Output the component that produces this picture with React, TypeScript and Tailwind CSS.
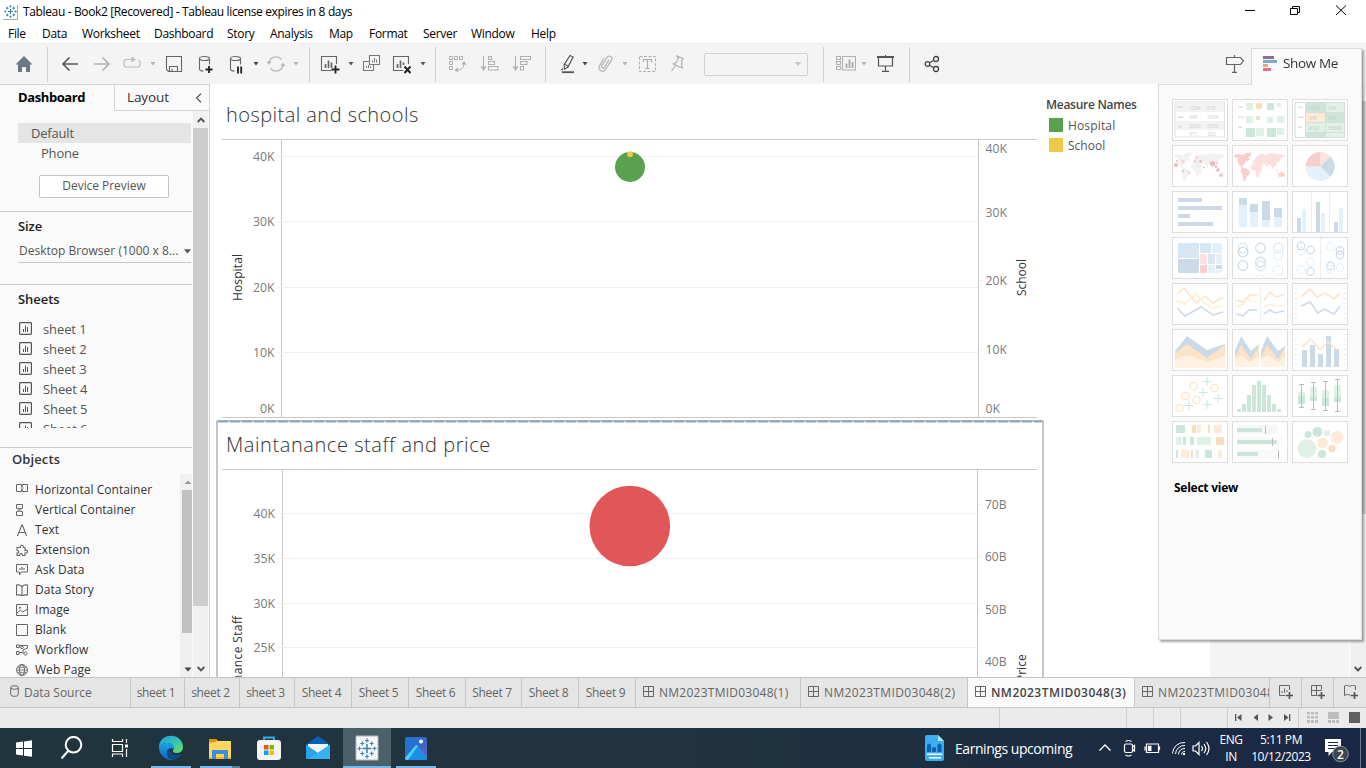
import React from "react";

type Kids = { children?: React.ReactNode };

const Icon = ({ className = "", children, w = 20, h = 20 }: Kids & { className?: string; w?: number; h?: number }) => (
  <svg width={w} height={h} viewBox={`0 0 ${w} ${h}`} fill="none" className={`shrink-0 ${className}`}>
    {children}
  </svg>
);

const Caret = ({ className = "" }: { className?: string }) => (
  <svg width="6" height="4" viewBox="0 0 6 4" className={`shrink-0 ${className}`}>
    <path d="M0.5 0H5.5L3 3.4Z" fill="currentColor" />
  </svg>
);

const Sep = ({ className = "" }: { className?: string }) => (
  <div className={`h-[35px] w-px shrink-0 bg-[#d0d0d0] ${className}`} />
);

const TableauMark = ({ size, className = "" }: { size: number; className?: string }) => (
  <svg width={size} height={size} viewBox="0 0 24 24" fill="none" stroke="#2f7ca6" className={`shrink-0 ${className}`}>
    <path d="M12 7.5v9M7.5 12h9" strokeWidth="1.9" />
    <path d="M12 0.5v4M10 2.5h4M12 19.5v4M10 21.5h4M2.5 10v4M0.5 12h4M21.5 10v4M19.5 12h4" strokeWidth="1.6" />
    <path d="M6 3.2v5M3.5 5.7h5M18 3.2v5M15.5 5.7h5M6 15.8v5M3.5 18.3h5M18 15.8v5M15.5 18.3h5" strokeWidth="1.7" />
  </svg>
);

const TitleBar = () => (
  <div className="flex h-6 shrink-0 items-center bg-white">
    <div className="ml-[3px] flex size-[15px] items-center justify-center border-r border-b border-[#aaa]">
      <TableauMark size={13} />
    </div>
    <span className="ml-[5px] text-[12px] tracking-[-0.36px] text-black">
      Tableau - Book2 [Recovered] - Tableau license expires in 8 days
    </span>
    <svg width="110" height="20" viewBox="0 0 110 20" className="mr-[18px] ml-auto" fill="none" stroke="#000">
      <path d="M7 8.5h10" />
      <path d="M52.5 6.5h7v6h-7zM54.5 6V4.500h7v6H60" />
      <path d="M98 3.500l10 9.500M108 3.500L98 13" />
    </svg>
  </div>
);

const menus: [string, string][] = [
  ["File", "w-[34px]"], ["Data", "w-[40px]"], ["Worksheet", "w-[72px]"], ["Dashboard", "w-[73px]"],
  ["Story", "w-[43px]"], ["Analysis", "w-[59px]"], ["Map", "w-[40px]"], ["Format", "w-[54px]"],
  ["Server", "w-[48px]"], ["Window", "w-[60px]"], ["Help", "w-[40px]"],
];

const MenuBar = () => (
  <div className="flex h-[19px] shrink-0 items-center bg-white pl-2 text-[12px] tracking-[-0.3px] text-black">
    {menus.map(([m, w]) => (
      <span key={m} className={w}>{m}</span>
    ))}
  </div>
);

const Toolbar = () => (
  <div className="flex h-[41px] shrink-0 items-center border-t border-[#ececec] bg-[#f4f4f4] text-[#666]">
    <Icon className="ml-[14px]">
      <path d="M10 2L18.5 10.5H16V18H12V13H8V18H4V10.5H1.5Z" fill="#6d7785" />
    </Icon>
    <Sep className="ml-[13px]" />
    <Icon className="ml-3"><path d="M18 10H3M9.5 3.5L3 10l6.500 6.500" stroke="#5a5a5a" strokeWidth="1.700" /></Icon>
    <Icon className="ml-3"><path d="M2 10H17M10.500 3.500L17 10l-6.500 6.500" stroke="#b2b2b2" strokeWidth="1.700" /></Icon>
    <Icon className="ml-[10px]">
      <path d="M10 5.500H4.500a2.500 2.500 0 0 0-2.500 2.500v2.500a2.500 2.500 0 0 0 2.500 2.500h11a2.500 2.500 0 0 0 2.500-2.500V8.500a2.500 2.500 0 0 0-1.500-2.300" stroke="#bcbcbc" strokeWidth="1.2" />
      <path d="M9.500 2.500L14 5.500L9.500 8.500Z" fill="#bcbcbc" />
    </Icon>
    <Caret className="ml-2 text-[#b0b0b0]" />
    <Icon className="ml-2">
      <path d="M2.500 2.500h15v15h-13l-2-2zM5.500 17.500v-5h8v5M8 17.500v-2.500" stroke="#666" strokeWidth="1.1" />
    </Icon>
    <Icon className="ml-3">
      <g stroke="#666" strokeWidth="1.1"><ellipse cx="8.500" cy="4.500" rx="5" ry="2" /><path d="M3.500 4.500v10.500c0 1.200 1.800 2 4 2M13.500 4.500v6" /></g>
      <path d="M13 12v7M9.500 15.500h7" stroke="#222" strokeWidth="1.8" />
    </Icon>
    <Icon className="ml-3">
      <g stroke="#666" strokeWidth="1.1"><ellipse cx="7.500" cy="4.500" rx="5" ry="2" /><path d="M2.500 4.500v10.500c0 1.200 1.800 2 4 2M12.500 4.500v6" /></g>
      <path d="M10 12.500v7M13.200 12.500v7" stroke="#222" strokeWidth="1.800" />
    </Icon>
    <Caret className="ml-[5px] text-[#444]" />
    <Icon className="ml-[7px]">
      <path d="M3 8.500a7.200 7.200 0 0 1 12.500-3M17 11.500a7.200 7.200 0 0 1-12.500 3" stroke="#b8b8b8" strokeWidth="1.300" />
      <path d="M0.500 7.500h5L3 11ZM14.500 12h5L17 8.500Z" fill="#b8b8b8" />
    </Icon>
    <Caret className="ml-[7px] text-[#b0b0b0]" />
    <Sep className="ml-[10px]" />
    <Icon className="ml-[10px]">
      <path d="M16.500 10V2.500h-15v14h10" stroke="#666" strokeWidth="1.1" />
      <path d="M5.500 10v4M8.500 6.500V14M11.500 8.500V14" stroke="#666" strokeWidth="1.700" />
      <path d="M15.500 11.500v8M11.500 15.500h8" stroke="#222" strokeWidth="1.800" />
    </Icon>
    <Caret className="ml-2 text-[#555]" />
    <Icon className="ml-2">
      <path d="M7.500 1.500h10v9h-10zM7.500 7.500h-6v9h10v-6" stroke="#777" strokeWidth="1.1" />
      <path d="M10.500 6.500v2M12.500 4v4.500M14.500 5.500v3M4.500 12v2M6.500 11v3M8.500 12.500v1.500" stroke="#777" />
    </Icon>
    <Icon className="ml-[10px]">
      <path d="M16.500 10V2.500h-15v14h10" stroke="#666" strokeWidth="1.1" />
      <path d="M5.500 10v4M8.500 6.500V14M11.500 8.500V11" stroke="#666" strokeWidth="1.700" />
      <path d="M12.500 12.500l6 6.500M18.500 12.500l-6 6.500" stroke="#222" strokeWidth="1.900" />
    </Icon>
    <Caret className="ml-2 text-[#555]" />
    <Sep className="ml-[9px]" />
    <Icon className="ml-3">
      <path d="M1.500 2.500h3v3h-3zM6.500 2.500h3v3h-3zM11.500 2.500h3v3h-3zM1.500 7.500h3v3h-3zM1.500 12.500h3v3h-3zM16 8.500v2a6 6 0 0 1-6 5.500h-1" stroke="#b0b0b0" />
      <path d="M13.500 10.500L16 7l2.500 3.500ZM10 13.500L6.500 16l3.500 2.500Z" fill="#b0b0b0" />
    </Icon>
    <Icon className="ml-3">
      <path d="M3.500 2v13M8.500 2.500h3v3h-3zM8.500 7.500h6v3h-6zM8.500 12.500h9.500v3.500H8.500z" stroke="#b0b0b0" strokeWidth="1.1" />
      <path d="M0.500 12.500h6L3.500 17Z" fill="#b0b0b0" />
    </Icon>
    <Icon className="ml-3">
      <path d="M3.500 2v13M8.500 2.500h10v3h-10zM8.500 7.500h6.500v3H8.500zM8.500 12.500h3v3.500h-3z" stroke="#b0b0b0" strokeWidth="1.1" />
      <path d="M0.500 12.500h6L3.500 17Z" fill="#b0b0b0" />
    </Icon>
    <Sep className="ml-[13px]" />
    <Icon className="ml-3">
      <path d="M12 1.500l3 1.500L10 13l-3.500 2-.5-4zM7 10.500l3 1.500M5 14.500l-1.500 1.500" stroke="#555" strokeWidth="1.200" />
      <path d="M4 18.200h12" stroke="#555" strokeWidth="1.800" />
    </Icon>
    <Caret className="ml-1 text-[#444]" />
    <Icon className="ml-2">
      <path d="M13 5.500L8.500 13.500a1.600 1.600 0 0 1-2.800-1.600L11 3.500a2.600 2.600 0 0 1 4.500 2.700L9.500 15.500a3.500 3.500 0 0 1-6-3.600L8 4" stroke="#b4b4b4" strokeWidth="1.200" />
    </Icon>
    <Caret className="ml-[6px] text-[#b0b0b0]" />
    <Icon className="ml-[10px]">
      <path d="M1.500 2.500h16v15h-16z" stroke="#b0b0b0" strokeDasharray="3 1.500" />
      <path d="M5.500 8V5.500h8V8M9.500 5.500v9M7.500 14.500h4" stroke="#aaa" strokeWidth="1.200" />
    </Icon>
    <Icon className="ml-[10px]">
      <path d="M9 2l6 2.500-1 2-.5 4 .8 3.500-9-4 3.200-1.700 1.500-3.800zM7.500 11.500l-4 5.500" stroke="#b0b0b0" strokeWidth="1.200" />
    </Icon>
    <div className="ml-4 flex h-[23px] w-[104px] shrink-0 items-center justify-end rounded-[2px] border border-[#d2d2d2] pr-[5px]">
      <svg width="8" height="5" viewBox="0 0 8 5"><path d="M0.5 0h7L4 4Z" fill="#c8c8c8" /></svg>
    </div>
    <Sep className="ml-[15px]" />
    <Icon className="ml-3">
      <path d="M.5 2.500h4v3h-4zM.5 7.500h4v3h-4zM.5 12.500h4v3h-4zM6.500 2.500h13v13.500h-13z" stroke="#b0b0b0" strokeWidth="1.100" />
      <path d="M10.500 9.500v4.500M13.500 5.500v8.500M16.500 8v6" stroke="#aaa" strokeWidth="1.800" />
    </Icon>
    <Caret className="ml-[5px] text-[#b0b0b0]" />
    <Icon className="ml-[9px]">
      <path d="M1 3h17" stroke="#555" strokeWidth="2" />
      <path d="M2.500 4v8h14V4M9.500 1v1M9.500 12v5M6 17.300h7" stroke="#555" strokeWidth="1.200" />
    </Icon>
    <Sep className="ml-[13px]" />
    <Icon className="ml-3">
      <g stroke="#444" strokeWidth="1.300"><circle cx="5.500" cy="10" r="2.300" /><circle cx="14" cy="5" r="2.500" /><circle cx="14" cy="15" r="2.500" /><path d="M7.500 8.800l4.300-2.500M7.500 11.300l4.300 2.400" /></g>
    </Icon>
    <Icon className="mr-[121px] ml-auto">
      <path d="M1.500 3.500h14l3 3.500-3 3.500h-14zM9.500 1v2.500M9.500 10.500V18M7 18.300h5" stroke="#666" strokeWidth="1.200" />
    </Icon>
  </div>
);

const SheetIcon = () => (
  <Icon w={13} h={13} className="-mt-px">
    <rect x=".6" y=".6" width="11.800" height="11.800" rx=".8" stroke="#555" strokeWidth="1.200" />
    <path d="M4.500 7v3M6.500 3.500V10M8.500 5v5" stroke="#555" />
  </Icon>
);

const objects: [string, React.ReactNode][] = [
  ["Horizontal Container", <><path d="M.5 .5h5v7h-5zM6.500 .5h5v7h-5z" stroke="#666" /><path d="M4.500 2.500h3v3h-3z" fill="#bbb" /></>],
  ["Vertical Container", <><path d="M.5 .5h6v4h-6zM.5 7.500h6v4h-6z" stroke="#666" /><path d="M1.500 4.500h4v3h-4z" fill="#aaa" /></>],
  ["Text", <path d="M1.500 12L5.800 1h.6L10.600 12M3 8.500h6.200" stroke="#666" strokeWidth="1.100" />],
  ["Extension", <path d="M1 3.500h3.500C3.500 1 7.500 0 7.500 3.500H9v3c3.500-1 3.500 3 0 2.500v2.500H6.500c0-2.500-3-2.500-3 0H1V9c2.500 0 2.500-2.500 0-2.500z" stroke="#666" strokeWidth="1.100" />],
  ["Ask Data", <><path d="M.5 .5h11v7.500H5.500L3.500 11V8h-3z" stroke="#666" /><path d="M3 4h2V3h2v1h2v2H3z" fill="#aaa" /></>],
  ["Data Story", <path d="M.5 1c2.500-.5 4 0 5.500 1.500 1.500-1.500 3-2 5.500-1.500v10c-2.500-.5-4 0-5.500 .7-1.500-.7-3-1.200-5.500-.7zM6 2.500v9" stroke="#666" strokeWidth="1.100" />],
  ["Image", <><path d="M.5 .5h11v11H.5zM.5 9.500l4-3.500 2 2 5-3" stroke="#666" /><circle cx="4" cy="3.800" r="1" fill="#666" /></>],
  ["Blank", <path d="M.5 .5h11v11H.5z" stroke="#666" />],
  ["Workflow", <g stroke="#666"><path d="M.5 1h3v2.500h-3zM.5 7.500h2.500v3H.5zM3.500 1.500h8v2.500L7 6v4M3 8.500h3" /><circle cx="6" cy="3.500" r="1.300" /><circle cx="9.500" cy="9.500" r="1.600" /></g>],
  ["Web Page", <g stroke="#666"><circle cx="6" cy="6" r="5.400" /><ellipse cx="6" cy="6" rx="2.500" ry="5.400" /><path d="M.6 6h10.800M1.500 3.300h9M1.500 8.700h9" strokeWidth=".8" /></g>],
];

const Sidebar = () => (
  <aside className="flex w-[210px] shrink-0 flex-col border-t border-r border-[#d4d4d4] bg-[#fafafa] text-[13px] text-[#555]">
    <div className="flex h-[26px] shrink-0">
      <div className="w-[114px] pt-[3px] pl-[18px] text-[13px] font-bold tracking-[-0.4px] text-black">Dashboard</div>
      <div className="flex flex-1 items-center justify-between border-b border-l border-[#d4d4d4] pr-[7px] pl-3">
        <span className="text-[13.5px] tracking-[-0.1px] text-[#333]">Layout</span>
        <svg width="7" height="10" viewBox="0 0 7 10" fill="none" stroke="#555" strokeWidth="1.200"><path d="M6 .7L1.500 5L6 9.300" /></svg>
      </div>
    </div>
    <div className="flex min-h-0 flex-1">
      <div className="flex w-[193px] flex-col overflow-hidden">
        <div className="mt-3 ml-[18px] h-5 w-[173px] shrink-0 bg-[#e5e5e5] pl-[13px] leading-5 tracking-[-0.2px]">Default</div>
        <div className="h-5 shrink-0 pl-[41px] leading-5 tracking-[-0.2px]">Phone</div>
        <button className="mt-3 ml-[39px] flex h-[23px] w-[130px] shrink-0 items-center justify-center rounded-[2px] border border-[#c4c4c4] bg-white text-[12px] tracking-[-0.05px]">
          <span className="mb-px">Device Preview</span>
        </button>
        <div className="mt-[13px] h-px w-[192px] shrink-0 bg-[#c8c8c8]" />
        <div className="mt-1 h-5 shrink-0 pl-[18px] leading-5 font-semibold tracking-[-0.1px] text-[#222]">Size</div>
        <div className="mt-1 ml-[18px] flex h-[23px] w-[173px] shrink-0 items-center justify-between border-b border-[#c8c8c8]">
          <span className="pl-px text-[12px] tracking-[0.02px] whitespace-nowrap">Desktop Browser (1000 x 8...</span>
          <svg width="7" height="5" viewBox="0 0 7 5"><path d="M0 .3h7L3.500 4.500Z" fill="#555" /></svg>
        </div>
        <div className="mt-[21px] h-px w-[192px] shrink-0 bg-[#c8c8c8]" />
        <div className="mt-1 h-5 shrink-0 pl-[18px] leading-5 font-semibold tracking-[-0.05px] text-[#222]">Sheets</div>
        <div className="mt-[10px] h-[109px] shrink-0 overflow-hidden">
          {["sheet 1", "sheet 2", "sheet 3", "Sheet 4", "Sheet 5", "Sheet 6"].map((s) => (
            <div key={s} className="flex h-5 items-center gap-[11px] pl-[19px] tracking-[-0.1px]">
              <SheetIcon />
              <span className="pt-px">{s}</span>
            </div>
          ))}
        </div>
        <div className="mt-[19px] h-px w-[192px] shrink-0 bg-[#c8c8c8]" />
        <div className="mt-px h-5 shrink-0 pl-3 leading-5 font-semibold tracking-[0.1px] text-[#333]">Objects</div>
        <div className="mt-[5px] flex min-h-0 flex-1">
          <div className="w-[180px] overflow-hidden pt-[6px]">
            {objects.map(([name, art]) => (
              <div key={name} className="flex h-5 items-center gap-[7px] pl-4 text-[12px] tracking-[0.04px] text-[#333]">
                <Icon w={12} h={12}>{art}</Icon>
                {name}
              </div>
            ))}
          </div>
          <div className="flex w-3 flex-col items-end bg-[#f0f0f0]">
            <svg width="10" height="16" viewBox="0 0 10 16"><path d="M2.500 10L6 6.500L9.500 10Z" fill="#999" /></svg>
            <div className="h-[143px] w-[10px] bg-[#c1c1c1]" />
            <svg width="10" height="16" viewBox="0 0 10 16" className="mt-auto"><path d="M2.500 6.500h7L6 10.500Z" fill="#444" /></svg>
          </div>
        </div>
      </div>
      <div className="flex w-[15px] flex-col bg-[#f0f0f0]">
        <div className="flex h-[17px] items-center justify-center">
          <svg width="8" height="6" viewBox="0 0 8 6" fill="none" stroke="#505050" strokeWidth="1.800"><path d="M.7 5L4 1.600L7.300 5" /></svg>
        </div>
        <div className="h-[478px] bg-[#cdcdcd]" />
        <svg width="8" height="6" viewBox="0 0 8 6" fill="none" stroke="#505050" strokeWidth="1.800" className="mx-auto mt-auto mb-[5px]"><path d="M.7 1L4 4.400L7.300 1" /></svg>
      </div>
    </div>
  </aside>
);

const hospitalLeft: [string, number][] = [["40K", 17], ["30K", 82], ["20K", 148], ["10K", 213], ["0K", 269]];
const hospitalRight: [string, number][] = [["40K", 9], ["30K", 73], ["20K", 141], ["10K", 210], ["0K", 269]];
const staffLeft: [string, number][] = [["40K", 44], ["35K", 89], ["30K", 134], ["25K", 178]];
const staffRight: [string, number][] = [["70B", 35], ["60B", 87], ["50B", 140], ["40B", 192]];

const AxisLabels = ({ rows, x, anchor }: { rows: [string, number][]; x: number; anchor: "start" | "end" }) => (
  <g fill="#7a7a7a" fontSize="12">
    {rows.map(([t, y]) => (
      <text key={t} x={x} y={y + 5} textAnchor={anchor} textLength={t === "0K" ? 14.500 : 21.500} lengthAdjust="spacingAndGlyphs">{t}</text>
    ))}
  </g>
);

const Dashboard = () => (
  <main className="flex min-w-0 flex-1 bg-white">
    <div className="ml-[6px] flex w-[828px] shrink-0 flex-col overflow-hidden">
      <section className="flex h-[336px] shrink-0 flex-col">
        <h2 className="h-[55px] pt-[17px] pl-[10px] text-[20px] leading-7 font-light tracking-[0.45px] text-[#333]">hospital and schools</h2>
        <svg width="820" height="279" viewBox="0 0 820 279" fill="none" className="ml-[6px]">
          <path d="M0 .5H815M0 278.500H815M59.500 0V279M756.500 0V279" stroke="#c8c8c8" />
          <path d="M55 17.500H756M55 82.500H756M55 148.500H756M55 213.500H756M757 5.500H761M757 73.500H761M757 141.500H761M757 210.500H761" stroke="#f0f0f0" />
          <AxisLabels rows={hospitalLeft} x={52.500} anchor="end" />
          <AxisLabels rows={hospitalRight} x={763.500} anchor="start" />
          <circle cx="408" cy="28" r="15" fill="#59a14f" />
          <circle cx="408" cy="15.300" r="3" fill="#edc948" />
          <text transform="translate(20 162) rotate(-90)" fontSize="12" fill="#333" textLength="47">Hospital</text>
          <text transform="translate(804 157) rotate(-90)" fontSize="12" fill="#333" textLength="37">School</text>
        </svg>
      </section>
      <section className="flex flex-1 flex-col overflow-hidden border-x-2 border-[#c6c6c6]">
        <svg width="824" height="3" viewBox="0 0 824 3" className="shrink-0">
          <path d="M0 1H824" stroke="#b9bcc2" strokeWidth="2" />
          <path d="M0 1.500H824" stroke="#8fa3c4" strokeWidth="1.800" strokeDasharray="10 2" />
        </svg>
        <h2 className="h-[46px] shrink-0 pt-2 pl-[8px] text-[20px] leading-7 font-light tracking-[0.57px] text-[#333]">Maintanance staff and price</h2>
        <svg width="820" height="208" viewBox="0 0 820 208" fill="none" className="ml-[4px] shrink-0">
          <path d="M0 .5H815M60.500 0V208M755.500 0V208" stroke="#c8c8c8" />
          <path d="M56 44.500H755M56 89.500H755M56 134.500H755M56 178.500H755M756 35.500H760M756 87.500H760M756 140.500H760M756 192.500H760" stroke="#f0f0f0" />
          <AxisLabels rows={staffLeft} x={53} anchor="end" />
          <AxisLabels rows={staffRight} x={763} anchor="start" />
          <circle cx="407.800" cy="57" r="40.300" fill="#e15759" />
          <text transform="translate(20 254) rotate(-90)" fontSize="12" fill="#333" textLength="107">Maintanance Staff</text>
          <text transform="translate(804 213) rotate(-90)" fontSize="12" fill="#333">Price</text>
        </svg>
      </section>
    </div>
    <div className="flex w-[166px] shrink-0 flex-col pt-[11px] pl-[2px] text-[12px] text-[#555]">
      <div className="h-5 leading-5 font-semibold tracking-[-0.27px] text-[#444]">Measure Names</div>
      <div className="flex h-5 items-center pl-[3px]"><span className="mr-[5px] size-[14px] bg-[#59a14f]" /><span className="pt-px tracking-[0.15px]">Hospital</span></div>
      <div className="flex h-5 items-center pl-[3px]"><span className="mr-[5px] size-[14px] bg-[#edc948]" /><span className="pt-px">School</span></div>
    </div>
    <div className="flex-1 border-r border-white bg-[#f4f4f4]" />
    <div className="flex w-4 shrink-0 flex-col bg-[#f0f0f0]">
      <div className="mt-[17px] h-[413px] bg-[#cdcdcd]" />
      <svg width="8" height="6" viewBox="0 0 8 6" fill="none" stroke="#505050" strokeWidth="1.800" className="mx-auto mt-auto mb-[5px]"><path d="M.7 1L4 4.400L7.300 1" /></svg>
    </div>
  </main>
);

const DG = "#cce6da", LG = "#e0f2e7", OR = "#fadcc0", LO = "#feebd7", DB = "#ccdae8", LB = "#e4f1fb", DR = "#f7cfcd", LR = "#ffe1e1", LINE = "#fde3c7";

const Rects = ({ items }: { items: [number, number, number, number, string][] }) => (
  <>{items.map(([x, y, w, h, c], i) => <rect key={i} x={x} y={y} width={w} height={h} fill={c} />)}</>
);

const Rings = ({ items, r }: { items: [number, number, string][]; r: number }) => (
  <>{items.map(([x, y, c], i) => <circle key={i} cx={x} cy={y} r={r} stroke={c} strokeWidth="1.200" />)}</>
);

const World = ({ americas, rest, south }: { americas: string; rest: string; south: string }) => (
  <>
    <path d="M2 10l4-1 5 1 3-2 6-.5-1 3-3 2 2 2-4 2-2 3-2 1 1 2 2 1-1 1-3-2-2-3-2-4 1-3-3 .5zM10 23l4 .5 4 3-1 3-3 3-1 4-1.500-1-1-6-2-3z" fill={americas} />
    <path d="M24 13l2-3 4-1 4 1 5-2 6 1 8 1-1 2-3 1-1 3-3 1-1 4-3 1 1 3-2-2-1-3-3 0-1 3-2-4-3-1 1 3-2 1 1 3-2 3-2 4h-1.500l-1-6-4-1-.5-4 3-3-2-1 2-2z" fill={rest} />
    <path d="M46 29l3-2 2 0 2 3-1 2-2-.5-3 .5zM43 24l3 2-1 1z" fill={south} />
  </>
);

const thumbs: React.ReactNode[] = [
  <>
    <rect x="3" y="3" width="49.500" height="35" stroke="#e2e2e2" />
    <Rects items={[[4, 4, 48, 9, "#f3f3f3"], [4, 22, 48, 9, "#f3f3f3"], [6, 7.500, 5, 1.500, "#ddd"], [5.500, 17.500, 6, 1.500, "#ddd"], [6, 27, 4, 1.500, "#ddd"]]} />
    <g fontSize="5.500" fill="#d2d2d2" letterSpacing="-.4"><text x="17" y="10.500">1234</text><text x="35" y="10.500">678</text><text x="17" y="20">368</text><text x="35" y="20">3034</text><text x="17" y="29">2620</text><text x="35" y="29">2559</text><text x="17" y="36.800">971</text><text x="35" y="36.800">322</text></g>
  </>,
  <Rects items={[[6, 7.500, 5, 1.500, "#e2e2e2"], [6, 17.500, 6, 1.500, "#e2e2e2"], [6, 27.500, 4, 1.500, "#e2e2e2"], [14, 4, 7, 7, LG], [24, 4, 6, 6, OR], [35, 4, 7, 7, DG], [45, 4, 4, 4, LG], [14, 17, 7, 7, LG], [24, 17, 4, 4, OR], [35, 18, 6, 6, LG], [45, 17, 7, 7, LG], [14, 29, 9, 9, DG], [24, 29, 8, 8, LG], [35, 29, 9, 9, DG], [45, 29, 7, 7, LG]]} />,
  <>
    <Rects items={[[14, 3, 19, 10, DG], [34, 3, 19, 10, LG], [14, 14, 19, 9, LO], [34, 14, 19, 9, DG], [14, 24, 19, 9, LG], [34, 24, 19, 9, LG], [14, 34, 19, 4, DG], [34, 34, 19, 4, LG], [6, 7.500, 5, 1.500, "#e2e2e2"], [6, 17.500, 6, 1.500, "#e2e2e2"], [6, 27.500, 4, 1.500, "#e2e2e2"]]} />
    <path d="M3 3.500h49.500v35H3zM13.500 3v35M33.500 3v35M14 13.500h39M14 23.500h39M14 33.500h39" stroke="#d8dcd9" />
    <g fontSize="5.500" fill="#c4d0ca" letterSpacing="-.4"><text x="16" y="10.500">1234</text><text x="36" y="10.500">546</text><text x="16" y="20.500">368</text><text x="36" y="20.500">343</text><text x="16" y="30.500">2620</text><text x="36" y="30.500">53890</text></g>
  </>,
  <>
    <World americas="#f1f1f1" rest="#f1f1f1" south="#f1f1f1" />
    <g fill="#ebb9be"><circle cx="4" cy="20" r="2" /><circle cx="40.500" cy="18.500" r="2.500" /><circle cx="28.500" cy="16.500" r="1.500" /><circle cx="5" cy="16" r="1" /><circle cx="32" cy="22.500" r="1" /><circle cx="44" cy="21.500" r="1.300" /><circle cx="46" cy="25" r="1.800" /><circle cx="49" cy="30.500" r="1.300" /><circle cx="11" cy="26" r="1" /></g>
    <g fill="#fad0d0"><circle cx="11" cy="16.500" r="1.500" /><circle cx="24.500" cy="12.500" r="1.500" /><circle cx="23" cy="16" r="1.500" /><circle cx="17" cy="27.500" r="1.500" /><circle cx="45" cy="18" r="1.200" /></g>
  </>,
  <World americas={DR} rest="#fddfdf" south={DR} />,
  <>
    <path d="M28.300 21.500V7a14.500 14.500 0 0 1 10.200 4.300Z" fill={LR} />
    <path d="M28.300 21.500L38.500 11.300a14.500 14.500 0 0 1 0 20.400Z" fill={DB} />
    <path d="M28.300 21.500L38.500 31.700A14.500 14.500 0 0 1 13.800 21.500Z" fill={LB} />
    <path d="M28.300 21.500H13.800A14.500 14.500 0 0 1 28.300 7Z" fill={DR} />
  </>,
  <Rects items={[[6, 7, 24, 4, DB], [6, 15, 44, 4, DB], [6, 23, 12, 4, DB], [6, 31, 35, 4, DB]]} />,
  <Rects items={[[7, 7, 8, 7, DB], [7, 14, 8, 22, LB], [18, 13, 8, 8, DB], [18, 21, 8, 15, LB], [30, 10, 8, 19, DB], [30, 29, 8, 7, LB], [42, 17, 8, 9, DB], [42, 26, 8, 10, LB]]} />,
  <><Rects items={[[5, 27, 4, 14, DB], [10, 18, 4, 23, LB], [24, 11, 4, 30, DB], [29, 22, 4, 19, LB], [42, 31, 4, 10, DB], [47, 17, 4, 24, LB]]} /><path d="M19.500 1v40M37.500 1v40" stroke="#eee" /></>,
  <Rects items={[[6, 6, 21, 15, "#d8e6f1"], [6, 22, 21, 14, DB], [28, 6, 11, 10, "#d8e6f1"], [40, 6, 10, 10, LB], [28, 17, 7, 10, LR], [28, 28, 7, 8, DR], [36, 17, 7, 10, "#d8e6f1"], [44, 17, 6, 10, LB], [36, 28, 7, 8, LB], [44, 28, 6, 4, DB], [44, 33, 6, 3, LB]]} />,
  <><Rings r={4.800} items={[[11, 11, "#d8e6f1"], [11, 15, DB], [11, 28.500, DB], [28.500, 11, DB], [28.500, 25, DB], [28.500, 29, "#d8e6f1"], [46.500, 11, "#d8e6f1"], [46.500, 18, LB], [46, 33.500, LB]]} /><path d="M24 41a5 5 0 0 1 9 0" stroke={LB} /></>,
  <><Rings r={3.800} items={[[9, 14, LB], [9, 9, DB], [18.500, 13, DB], [18.500, 25, LB], [9, 32.500, LB], [18.500, 34.500, DB], [38.500, 10, LB], [48, 13.500, DB], [48, 18, DB], [38.500, 29, DB], [38.500, 32.500, LB], [48, 30.500, LB]]} /><path d="M28.500 1v40" stroke="#eee" /></>,
  <g strokeWidth="1.500"><path d="M5 11l7-6 12 15 9-7 8 7 10-6" stroke={LINE} /><path d="M5 18l8 3 11-10 8 9 8 5 11-2" stroke="#fff0d2" /><path d="M5 25l8 8 16-9 12 8 10-3" stroke={DB} /></g>,
  <><path d="M28.500 1v40" stroke="#eee" /><g strokeWidth="1.500"><path d="M4 17l7 2 7-7h7M32 17l6-8 6 5 8-2" stroke={LINE} /><path d="M4 24l6-2 5-7 4 4 6-1M32 24l6-3 6 3 8-2" stroke="#fff0d2" /><path d="M4 31l7 2 6-6h8M32 31l6-4 5 3 9-2" stroke={DB} /></g></>,
  <><path d="M3.500 5v33M53 5v33" stroke="#ececec" strokeWidth="3" strokeDasharray="1 4" /><g strokeWidth="1.500"><path d="M9 14l9-8 7 8 8-4 9 6 6-6" stroke={LINE} /><path d="M9 23l9-4 8 11 6-4 10 5 6-8" stroke={DB} /></g></>,
  <><path d="M3 22L15 7l20 14 18-6v17H3z" fill={DB} /><path d="M3 24l12-9 20 14 18-13v23H3z" fill="#fde3c7" /><path d="M3 31l12-5 20 7 18-6v12H3z" fill="#fff2e2" /></>,
  <><path d="M3 22L9 7l10 15 8-7v23H3zM29 22l6-15 11 15 7-5v21H29z" fill={DB} /><path d="M3 28l6-12 10 14 8-13v21H3zM29 28l6-12 11 14 7-11v19H29z" fill="#fde3c7" /><path d="M3 31l6-5 9 7 9-6v11H3zM29 31l6-5 11 7 7-6v11H29z" fill="#fff2e2" /></>,
  <><path d="M3.500 5v33M53 5v33" stroke="#ececec" strokeWidth="3" strokeDasharray="1 4" /><Rects items={[[10, 21, 5, 17, DB], [18, 16, 5, 22, DB], [26, 25, 5, 13, DB], [34, 7, 5, 31, DB], [42, 20, 5, 18, DB]]} /><path d="M10 18l9-8 9 11 8-8 9 8" stroke={LINE} strokeWidth="1.500" /></>,
  <><Rings r={3.700} items={[[21.500, 11, LINE], [42.500, 13, LINE], [13.500, 21, LINE], [24.500, 25, LINE], [7.500, 33, LINE]]} /><path d="M30.500 6.500h9M35 2v9M26.500 17.500h9M31 13v9M41.500 23.500h9M46 19v9M12.500 30.500h9M17 26v9M30.500 29.500h9M35 25v9" stroke={DG} /></>,
  <Rects items={[[5, 34, 4, 3, DG], [10, 29, 4, 8, DG], [15, 20, 4, 17, DG], [20, 10, 4, 27, DG], [25, 6, 4, 31, DG], [30, 10, 4, 27, DG], [35, 20, 4, 17, DG], [40, 29, 4, 8, DG], [45, 34, 4, 3, DG]]} />,
  <><Rects items={[[6, 17, 7, 4, LG], [6, 21, 7, 8, DG], [18, 12, 7, 10, LG], [18, 22, 7, 4, DG], [30, 15, 7, 8, LG], [30, 23, 7, 8, DG], [42, 10, 7, 12, LG], [42, 22, 7, 5, DG]]} /><path d="M7 9.500h5M9.500 10v22M7 32.500h5M19 7.500h5M21.500 8v26M19 34.500h5M31 6.500h5M33.500 7v28M31 35.500h5M43 4.500h5M45.500 5v31M43 36.500h5" stroke="#bcbcbc" /></>,
  <Rects items={[[4, 4, 9, 8, DG], [20, 4, 4, 8, OR], [25, 4, 4, 8, LO], [36, 4, 2, 8, OR], [42, 4, 8, 8, LO], [4, 16, 6, 8, LG], [11, 16, 3, 8, DG], [18, 16, 4, 8, DG], [25, 16, 14, 8, LG], [44, 16, 8, 8, OR], [4, 29, 2, 8, DG], [9, 29, 8, 8, LO], [19, 29, 2, 8, OR], [23, 29, 4, 8, LG], [33, 29, 7, 8, DG], [46, 29, 4, 8, LO]]} />,
  <><Rects items={[[5, 4, 40, 9, "#f7f7f7"], [5, 16, 46, 9, "#fafafa"], [5, 28, 40, 9, "#fafafa"], [5, 7, 25, 4, DG], [5, 19, 40, 4, DG], [5, 31, 21, 4, DG]]} /><path d="M33.500 5v8M40.500 17v8M46.500 29v8" stroke="#bbb" /></>,
  <><g fill={LG}><circle cx="15" cy="27.500" r="9.500" /><circle cx="35" cy="12" r="3.200" /></g><g fill={DG}><circle cx="16" cy="13.500" r="3.500" /><circle cx="25.500" cy="11" r="5" /><circle cx="30" cy="33" r="4" /></g><g fill={LO}><circle cx="45" cy="16.500" r="6.500" /><circle cx="30.500" cy="22" r="5.500" /></g><circle cx="40" cy="27.500" r="3.700" fill={OR} /></>,
];

const ShowMe = () => (
  <div className="absolute top-[48px] left-[1158px] flex w-[204px] flex-col items-end drop-shadow-[2px_2px_1px_rgba(0,0,0,0.35)]">
    <div className="z-10 -mb-px flex h-[37px] w-[111px] items-center border border-b-0 border-[#dadada] bg-[#fafafa] pb-[6px] pl-[11px]">
      <svg width="15" height="16" viewBox="0 0 15 16">
        <path d="M0 0h11v3H0z" fill="#8a6f9c" /><path d="M0 4h14v3H0z" fill="#84a9d1" /><path d="M0 8h5v3H0z" fill="#f2a27c" /><path d="M0 12h8v3H0z" fill="#f56f7f" />
      </svg>
      <span className="-mt-px ml-[5px] text-[13.500px] tracking-[-0.35px] text-[#333]">Show Me</span>
    </div>
    <div className="h-[556px] w-[204px] border border-[#dadada] bg-[#fafafa] pt-[14px] pl-[13px]">
      <div className="grid w-[176px] grid-cols-3 gap-1">
        {thumbs.map((t, i) => (
          <div key={i} className="h-[42px] w-[56px] bg-white shadow-[inset_0_0_0_1px_#dedede]">
            <svg width="56" height="42" viewBox="0 0 56 42" fill="none">{t}</svg>
          </div>
        ))}
      </div>
      <div className="mt-4 pl-[2px] text-[12px] leading-[18px] font-bold tracking-[-0.25px] text-black">Select view</div>
    </div>
  </div>
);

const GridIcon = ({ className = "" }: { className?: string }) => (
  <Icon w={11} h={11} className={className}><path d="M.5 .5h10v10H.5zM5.500 .5v10M.5 5.500h10" stroke="#666" /></Icon>
);

const sheetTabs: [string, string][] = [
  ["sheet 1", "w-[54px]"], ["sheet 2", "w-[55px]"], ["sheet 3", "w-[55px]"], ["Sheet 4", "w-[57px]"], ["Sheet 5", "w-[57px]"],
  ["Sheet 6", "w-[57px]"], ["Sheet 7", "w-[56px]"], ["Sheet 8", "w-[57px]"], ["Sheet 9", "w-[57px]"],
];

const boards: [string, string][] = [
  ["NM2023TMID03048(1)", "w-[165px] pl-[7px] tracking-[0.25px]"],
  ["NM2023TMID03048(2)", "w-[167px] pl-[7px] tracking-[0.35px]"],
  ["NM2023TMID03048(3)", "w-[167px] pl-[7px] bg-[#fafafa] font-semibold text-[#444] tracking-[0.46px]"],
  ["NM2023TMID03048(4)", "w-[135px] pl-[7px] tracking-[0.35px]"],
];

const Plus = () => <path d="M10.500 7v7M7 10.500h7" stroke="#555" strokeWidth="1.700" />;

const SheetTabs = () => (
  <div className="flex h-[31px] shrink-0 border-y border-[#c6c6c6] bg-[#e5e5e5] text-[12px] text-[#666]">
    <div className="flex w-[131px] shrink-0 items-center border-r border-[#c6c6c6] pl-[10px]">
      <Icon w={9} h={12} className="mb-[3px]"><ellipse cx="4.500" cy="2.500" rx="3.800" ry="1.800" stroke="#666" /><path d="M.7 2.500v7c0 2.400 7.600 2.400 7.600 0v-7" stroke="#666" /></Icon>
      <span className="ml-[5px] tracking-[-0.02px]">Data Source</span>
    </div>
    {sheetTabs.map(([t, w]) => (
      <div key={t} className={`flex shrink-0 items-center justify-center border-r border-[#c6c6c6] pr-[3px] tracking-[-0.3px] ${w}`}>{t}</div>
    ))}
    {boards.map(([t, c]) => (
      <div key={t} className={`flex shrink-0 items-center overflow-hidden border-r border-[#c6c6c6] whitespace-nowrap ${c}`}>
        <GridIcon className="mr-[5px] mb-[2px]" />
        {t}
      </div>
    ))}
    <div className="flex w-8 items-center justify-center border-r border-[#c6c6c6] pl-[2px]">
      <Icon w={15} h={15}><path d="M10.500 5V.5H.5v10h6M3 6v2M5.500 3.500V8M8 5v2" stroke="#666" /><Plus /></Icon>
    </div>
    <div className="flex w-8 items-center justify-center border-r border-[#c6c6c6] pl-[2px]">
      <Icon w={15} h={15}><path d="M10.500 5V.5H.5v10h6M5.500 .5v10M.5 5.500h10" stroke="#666" /><Plus /></Icon>
    </div>
    <div className="flex flex-1 items-center justify-center pl-[2px]">
      <Icon w={15} h={15}><path d="M6.500 10.500c-2-1.300-4-1.300-6 0V1c2-1 4-1 5.500 .5C7.500 0 9.500 0 11.500 1v4" stroke="#666" /><Plus /></Icon>
    </div>
  </div>
);

const StatusBar = () => (
  <div className="flex h-5 shrink-0 justify-end bg-[#ebebeb]">
    <div className="w-[127px] border-l border-[#cfcfcf]" />
    <div className="w-[27px] border-l border-[#cfcfcf]" />
    <div className="w-[27px] border-l border-[#cfcfcf]" />
    <div className="w-[47px] border-l border-[#cfcfcf]" />
    <div className="flex w-[71px] items-center border-l border-[#cfcfcf]">
      <svg width="70" height="9" viewBox="0 0 70 9" fill="#555" className="-ml-px -mt-[2px]">
        <path d="M8 1h1.300v7H8zM14.500 1v7L10 4.500zM31 1v7L26.500 4.500zM41.500 1v7L46 4.500zM57 1v7l4.500-3.500zM62 1h1.300v7H62z" />
      </svg>
    </div>
    <div className="flex w-[68px] items-center border-l border-[#cfcfcf]">
      <svg width="66" height="12" viewBox="0 0 66 12" className="-mt-px -ml-px">
        <path d="M9 0h3v2.500H9zM13 0h3v2.500h-3zM17 0h3v2.500h-3zM9 4h3v2.500H9zM13 4h3v2.500h-3zM17 4h3v2.500h-3zM9 8h3v3H9zM13 8h3v3h-3zM17 8h3v3h-3zM30 0h11v7H30zM30 8h3v3h-3zM34 8h3v3h-3zM38 8h3v3h-3z" fill="#bdbdbd" />
        <path d="M51 0h11v11H51z" fill="#606060" />
      </svg>
    </div>
  </div>
);

const App32 = ({ className = "", line = "", children }: Kids & { className?: string; line?: string }) => (
  <div className={`flex h-10 shrink-0 flex-col items-center justify-between pt-[7px] ${className}`}>
    <svg width="26" height="26" viewBox="0 0 26 26" fill="none">{children}</svg>
    <div className={`h-[2px] w-full ${line}`} />
  </div>
);

const Taskbar = () => (
  <div className="flex h-10 shrink-0 items-center bg-linear-to-r from-[#20343e] via-[#20333e] to-[#1a2745] text-white">
    <svg width="17" height="17" viewBox="0 0 17 17" fill="#fff" className="ml-4"><path d="M0 2.500L7 1.500V8H0zM8 1.400L16 .2V8H8zM0 9h7v6.500L0 14.600zM8 9h8v7.800L8 15.700z" /></svg>
    <svg width="24" height="24" viewBox="0 0 24 24" fill="none" stroke="#fff" strokeWidth="2" className="ml-[27px]"><circle cx="13.500" cy="8.700" r="7.800" /><path d="M8.500 14.500L1.500 22.500" /></svg>
    <svg width="18" height="18" viewBox="0 0 18 18" fill="none" stroke="#fff" strokeWidth="1.200" className="ml-[27px]"><path d="M1.500 5.500h10v7h-10zM1.500 0v2.500h10V0M1.500 18v-3h10v3M15.500 0v4M15.500 10v8" /><path d="M14 5.500h3v3h-3z" fill="#fff" stroke="none" /></svg>
    <App32 className="ml-[22px] w-10" line="bg-[#76b9ed]">
      <defs>
        <linearGradient id="eg" x1="0" y1="0" x2="1" y2="1"><stop stopColor="#1b9de2" /><stop offset=".5" stopColor="#35c1b8" /><stop offset="1" stopColor="#6fe05a" /></linearGradient>
        <linearGradient id="eb" x1="0" y1="0" x2="0" y2="1"><stop stopColor="#1ea0e6" /><stop offset="1" stopColor="#0a66c4" /></linearGradient>
      </defs>
      <path d="M1 12C1 5 6.500 .7 13 .7S25 5.500 25 12c0 4-3 6-6.500 6-3 0-4-1-3.500-2.500C17 12 14 8 9.500 8 5 8 1.500 10 1 13z" fill="url(#eg)" />
      <path d="M1 12.500C2 9 5.500 8 9.500 8 14 8 16.500 11.500 15 14c-2-2-6 0-6 4s4 7 8 6.500A12.500 12.500 0 0 1 1 12.500z" fill="url(#eb)" />
      <path d="M10.500 13.500c-3 4 0 9.500 6.500 10.800 3-.8 5.500-2.800 6.800-5.300-5 2.500-11.300 0-13.300-5.500z" fill="#114a8b" />
    </App32>
    <App32 className="ml-[9px] w-10" line="bg-linear-to-r from-[#76b9ed] from-80% to-[#5584a4] to-80%">
      <path d="M2 4h7l2 2h13v18H2z" fill="#f7b923" /><path d="M2 4h7v3H2z" fill="#dd9606" /><path d="M2 9L11 6h13v16H2z" fill="#ffd660" /><path d="M5 24v-9h16v9h-4v-5H9v5z" fill="#3b8fd6" />
    </App32>
    <App32 className="ml-[9px] w-10">
      <path d="M8 7V2.500h10V7" stroke="#2cb5ea" strokeWidth="1.800" /><rect x="1" y="5" width="24" height="20" rx="3" fill="#f4f4f4" />
      <path d="M8 10h4.500v4.500H8z" fill="#f25022" /><path d="M13.500 10H18v4.500h-4.500z" fill="#7fba00" /><path d="M8 15.500h4.500V20H8z" fill="#00a4ef" /><path d="M13.500 15.500H18V20h-4.500z" fill="#ffb900" />
    </App32>
    <App32 className="ml-[9px] w-10">
      <path d="M1 9.500L13 1l12 8.500L13 19z" fill="#0a5fb4" /><path d="M3 9h20v8L13 20 3 17z" fill="#f2f5f8" /><path d="M1 9.500L13 18 25 9.500V24H1z" fill="#2aa3e8" /><path d="M25 9.500V24H3z" fill="#3fb7f2" opacity=".7" />
    </App32>
    <App32 className="ml-[5px] w-12 bg-[#4c606a]" line="bg-[#76b9ed]">
      <path d="M2 1h22v24H2z" fill="#f5f7f8" stroke="#b0b8bc" />
      <g stroke="#4187ad" strokeWidth="1.200"><path d="M13 9v9M8.500 13.500h9" strokeWidth="1.600" /><path d="M13 3.500v4M11 5.500h4M13 19.500v4M11 21.500h4M5.500 11.500v4M3.500 13.500h4M20.500 11.500v4M18.500 13.500h4M8.300 6.500v4M6.300 8.500h4M17.700 6.500v4M15.700 8.500h4M8.300 16.500v4M6.300 18.500h4M17.700 16.500v4M15.700 18.500h4" /></g>
    </App32>
    <App32 className="ml-[5px] w-10" line="bg-[#76b9ed]">
      <defs><linearGradient id="ph" x1="0" y1="0" x2="1" y2="1"><stop stopColor="#1679d8" /><stop offset=".55" stopColor="#3668c4" /><stop offset="1" stopColor="#8d57b8" /></linearGradient></defs>
      <rect x="2" y="2" width="22" height="23" rx="2" fill="url(#ph)" /><path d="M2 23L12 11q1.500-1.500 3 0l9 11v1.500q0 1.500-2 1.500H4q-2 0-2-2z" fill="#1f8de5" /><path d="M2 23L12 11q1.500-1.500 3 0L5 25H4q-2 0-2-2z" fill="#45d2f7" /><circle cx="18" cy="6.500" r="2" fill="#fff" />
    </App32>
    <div className="ml-auto flex items-center">
      <svg width="20" height="26" viewBox="0 0 20 26"><path d="M2 0h11l6 6v18q0 2-2 2H2q-2 0-2-2V2Q0 0 2 0z" fill="#3aaef0" /><path d="M13 0l6 6h-6z" fill="#b5e3fb" /><path d="M2 10q2-3 4 0v7H2zM7 13q2-2 4 0v4H7zM12.500 10q2-3 4 0v7h-4z" fill="#0b62ac" /><path d="M2 18.500h15V20H2zM4 22h12v1.500H4z" fill="#fff" /></svg>
      <span className="ml-[10px] w-[144px] text-[14px] tracking-[-0.45px] whitespace-nowrap">Earnings upcoming</span>
      <svg width="112" height="20" viewBox="0 0 112 20" fill="none" stroke="#fff" strokeWidth="1.200">
        <path d="M.5 12.500L6 7l5.500 5.500" strokeWidth="1.400" />
        <rect x="25.500" y="6" width="8" height="8.500" rx="1.500" /><path d="M33.500 9l2-1.500v5.500l-2-1.500M26.500 3.500q3-2 6 0M26.500 17q3 2 6 0" />
        <path d="M47.500 6h12v8.500h-12zM60.500 8.500v3.500M46 8.500v4" /><path d="M49 7.700h3.500V13H49z" fill="#fff" stroke="none" />
        <path d="M73.500 15.500A11.500 11.500 0 0 1 86 4.500M76.500 16A9 9 0 0 1 86 7.500M79.500 16.500A6 6 0 0 1 86 10.500M82.500 16.500A3 3 0 0 1 86 13.500" strokeWidth="1" /><circle cx="85" cy="16" r="1.200" fill="#fff" stroke="none" />
        <path d="M94 8h2.500L100 4.500v12L96.500 13H94zM102.500 8q2 2.500 0 5M105 6q3.500 4.500 0 9M107.500 4q5 6.500 0 13" />
      </svg>
      <div className="ml-[6px] w-[28px] text-center text-[12px] leading-[17px] tracking-[-0.4px]">ENG<br />IN</div>
      <div className="ml-[4px] w-[64px] text-center text-[12px] leading-[17px] tracking-[-0.4px] whitespace-nowrap">5:11 PM<br />10/12/2023</div>
      <svg width="26" height="28" viewBox="0 0 26 28" className="mt-1 mr-[10px] ml-[11px]">
        <path d="M1 3h16v13H8l-3.500 4v-4H1z" fill="#fff" /><path d="M4 6.500h10M4 9.500h10M4 12.500h7" stroke="#1d2b42" strokeWidth="1.200" />
        <circle cx="16.500" cy="18" r="7.800" fill="#3c4550" stroke="#8a929b" />
        <text x="16.500" y="22.500" fontSize="12" fontWeight="600" textAnchor="middle" fill="#fff">2</text>
      </svg>
      <div className="mr-[5px] h-10 w-px bg-[#6e788a]" />
    </div>
  </div>
);

export default function App() {
  return (
    <div className="relative flex h-[768px] w-[1366px] flex-col overflow-hidden bg-white font-['Open_Sans','Noto_Sans',sans-serif]">
      <TitleBar />
      <MenuBar />
      <Toolbar />
      <div className="flex min-h-0 flex-1">
        <Sidebar />
        <Dashboard />
      </div>
      <SheetTabs />
      <StatusBar />
      <Taskbar />
      <ShowMe />
    </div>
  );
}
